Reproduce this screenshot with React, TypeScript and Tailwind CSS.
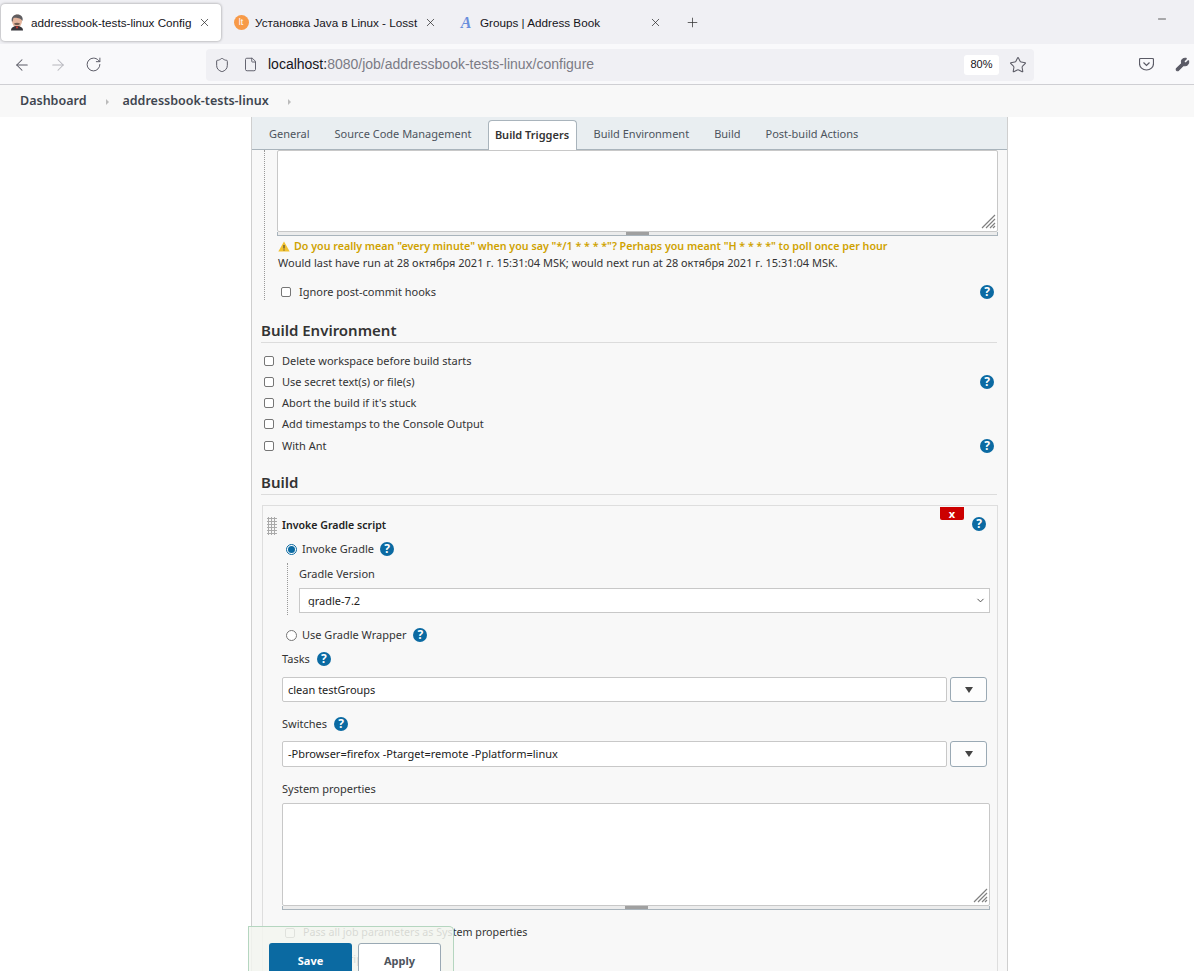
import { ArrowLeft, ArrowRight, ChevronDown, File, Minus, Plus, RotateCw, Shield, Star, Wrench, X } from "lucide-react";

function Help() {
  return (
    <span className="flex h-[14px] w-[14px] shrink-0 -translate-y-px items-center justify-center rounded-full bg-[#0b6aa2] text-[12px] leading-none font-bold text-white">?</span>
  );
}

function Check({ label, help, className = "" }: { label: string; help?: boolean; className?: string }) {
  return (
    <div className={`flex h-[21px] items-center pr-[3px] ${className}`}>
      <span className="h-[10px] w-[10px] -translate-y-px rounded-[2px] border border-[#767676] bg-white" />
      <span className="ml-[8px] flex-1 text-[#333]">{label}</span>
      {help && <Help />}
    </div>
  );
}

function Heading({ children }: { children: string }) {
  return (
    <div className="h-[22px] border-b border-[#dcdcdc] text-[15px] leading-[18px] font-semibold text-[#333]">{children}</div>
  );
}

function Grip() {
  return (
    <div className="absolute top-[11px] left-[4px] h-[18px] w-[10px] bg-[radial-gradient(#aaa_1px,transparent_1.2px)] bg-[length:3px_3px]" />
  );
}

function ResizeCorner() {
  return (
    <svg className="absolute right-[1px] bottom-[2px]" width="15" height="15" viewBox="0 0 15 15" stroke="#808080" strokeWidth="1.2">
      <path d="M1 14 14 1M5 14 14 5M9 14 14 9M12 14 14 12" />
    </svg>
  );
}

function TextArea({ className }: { className: string }) {
  return (
    <div className={className}>
      <div className="relative h-full rounded-[2px] border border-[#c8c8c8] bg-white">
        <ResizeCorner />
      </div>
      <div className="relative flex h-[4px] justify-center border-x border-b border-[#a9b4bc] bg-[#ececec]">
        <div className="h-[3px] w-[23px] bg-[#a0a0a0]" />
      </div>
    </div>
  );
}

function ComboRow({ value, tall }: { value: string; tall?: boolean }) {
  const height = tall ? "h-[26px]" : "h-[25px]";
  return (
    <div className="flex items-center pr-[3px]">
      <div className={`flex ${height} flex-1 items-center rounded-[2px] border border-[#c8c8c8] bg-white pt-px pl-[5px] text-[#222]`}>{value}</div>
      <div className={`ml-[3px] flex ${height} w-[37px] items-center justify-center rounded-[3px] border border-[#9aa9b4] bg-[#fdfdfd]`}>
        <span className="h-0 w-0 border-x-[4px] border-t-[6px] border-x-transparent border-t-[#444]" />
      </div>
    </div>
  );
}

function BrowserTab({ icon, title, active, width }: { icon: React.ReactNode; title: string; active?: boolean; width: string }) {
  return (
    <div className={`flex h-[37px] ${width} items-center rounded-[4px] pr-[10px] pl-[8px] ${active ? "bg-white shadow-[0_0_3px_rgba(0,0,0,0.4)]" : ""}`}>
      <span className="mr-[6px] flex h-[16px] w-[16px] shrink-0 items-center justify-center">{icon}</span>
      <span className="flex-1 overflow-hidden text-[11.7px] whitespace-nowrap text-[#15141a]">{title}</span>
      <X size={13} strokeWidth={1.3} className="ml-[4px] shrink-0 text-[#222]" />
    </div>
  );
}

function JenkinsIcon() {
  return (
    <svg width="16" height="17" viewBox="0 0 16 17">
      <ellipse cx="8" cy="7" rx="5" ry="6.500" fill="#e3b49c" />
      <path d="M3 8C1.500 3 5 .5 8.500 .5 12 .5 14.500 3 13.500 7 12.500 4 6 3 4.500 4 4 5.500 4 7 3 8Z" fill="#5f5d60" />
      <path d="M5 9.500c2-1 4-1 6 0-.5 2-5.500 2-6 0Z" fill="#6d5a50" />
      <path d="M2 16.500c0-3 2.500-4.500 6-4.500s6 1.500 6 4.500Z" fill="#35353b" />
      <path d="M6.500 12.500h3L8 15Z" fill="#d33833" />
    </svg>
  );
}

export default function App() {
  return (
    <div className="relative flex h-[971px] w-[1194px] flex-col overflow-hidden bg-white font-['Noto_Sans','Open_Sans',sans-serif] text-[11px] text-[#333]">
      {/* browser tabs */}
      <div className="flex h-[44px] shrink-0 items-start bg-[#f0f0f4] pt-[4px] pl-[1px] font-['Liberation_Sans',sans-serif]">
        <BrowserTab active width="w-[220px]" icon={<JenkinsIcon />} title="addressbook-tests-linux Config" />
        <div className="w-[4px]" />
        <BrowserTab width="w-[222px]" title="Установка Java в Linux - Losst" icon={<span className="flex h-[15px] w-[15px] items-center justify-center rounded-full bg-[#f79a48] text-[9px] text-white">lt</span>} />
        <div className="w-[3px]" />
        <BrowserTab width="w-[222px]" title="Groups | Address Book" icon={<span className="font-['Liberation_Serif',serif] text-[16px] leading-none font-bold text-[#6a8fdc] italic">A</span>} />
        <Plus size={15} strokeWidth={1.2} className="mt-[11px] ml-[13px] text-[#333]" />
        <div className="flex-1" />
        <Minus size={12} strokeWidth={1.3} className="mt-[9px] mr-[26px] text-[#111]" />
      </div>

      {/* toolbar */}
      <div className="flex h-[41px] shrink-0 items-center border-b border-[#cfcfd3] bg-[#f9f9fb] pt-px pl-[13px] font-['Liberation_Sans',sans-serif]">
        <ArrowLeft size={18} strokeWidth={1.4} className="text-[#5b5b66]" />
        <ArrowRight size={18} strokeWidth={1.4} className="ml-[18px] text-[#b5b5bb]" />
        <RotateCw size={17} strokeWidth={1.4} className="ml-[18px] text-[#5b5b66]" />
        <div className="ml-[104px] flex h-[32px] w-[828px] items-center rounded-[4px] bg-[#f0f0f4] pl-[8px]">
          <Shield size={16} strokeWidth={1.5} className="text-[#5b5b66]" />
          <File size={15} strokeWidth={1.5} className="ml-[13px] text-[#5b5b66]" />
          <span className="ml-[10px] flex-1 text-[14px] text-[#7b7b85]">
            <span className="text-[#15141a]">localhost:</span>8080/job/addressbook-tests-linux/configure
          </span>
          <span className="flex h-[20px] w-[35px] items-center justify-center rounded-[3px] bg-white text-[11px] text-[#15141a]">80%</span>
          <Star size={18} strokeWidth={1.4} className="mr-[7px] ml-[10px] text-[#5b5b66]" />
        </div>
        <div className="flex-1" />
        <svg width="15" height="15" viewBox="0 0 15 15" fill="none" stroke="#5b5b66" strokeWidth="1.2" className="mr-[21px]">
          <path d="M1.500 1.500h12a1 1 0 0 1 1 1v4a7 6.500 0 0 1-14 0v-4a1 1 0 0 1 1-1Z" />
          <path d="M4.500 5.500 7.500 8.500l3-3" />
        </svg>
        <Wrench size={15} strokeWidth={1.8} fill="currentColor" className="mr-[4px] text-[#5b5b66]" />
      </div>

      {/* breadcrumbs */}
      <div className="flex h-[32px] shrink-0 items-center bg-[#f8f8f8] pt-px pl-[20px] text-[12.5px] font-semibold text-[#3f4650]">
        <span>Dashboard</span>
        <span className="mr-[13px] ml-[20px] h-0 w-0 border-y-[3px] border-l-[3px] border-y-transparent border-l-[#bbb]" />
        <span>addressbook-tests-linux</span>
        <span className="ml-[19px] h-0 w-0 border-y-[3px] border-l-[3px] border-y-transparent border-l-[#bbb]" />
      </div>

      {/* config panel */}
      <div className="ml-[251px] min-h-0 w-[757px] flex-1 border-x border-[#cfcfcf] bg-[#f8f8f8]">
        <div className="flex h-[33px] items-end border-b border-[#a9b4bc] bg-[#e9eef1] pl-[8px] text-[#4d545d]">
          <span className="mb-[7px] ml-[9px]">General</span>
          <span className="mb-[7px] ml-[25px]">Source Code Management</span>
          <span className="-mb-px ml-[16px] flex h-[30px] w-[89px] items-center justify-center rounded-t-[4px] border border-b-0 border-[#a9b4bc] bg-white font-semibold text-[#333]">Build Triggers</span>
          <span className="mb-[7px] ml-[17px]">Build Environment</span>
          <span className="mb-[7px] ml-[25px]">Build</span>
          <span className="mb-[7px] ml-[25px]">Post-build Actions</span>
        </div>

        <div className="relative px-[9px]">
          <div className="absolute top-0 left-[12px] h-[150px] border-l border-dotted border-[#999]" />
          <TextArea className="ml-[16px] h-[86px] w-[721px] pb-[4px]" />

          <div className="mt-[2px] ml-[17px] flex h-[17px] items-center text-[#cfa200]">
            <svg width="12" height="11" viewBox="0 0 12 11" className="mr-[4px]">
              <path d="M6 .5 11.700 10.500H.3Z" fill="#f2c230" />
              <path d="M6 4v3.500M6 8.500v1" stroke="#333" strokeWidth="1" />
            </svg>
            <span className="text-[10.7px] font-semibold">Do you really mean "every minute" when you say "*/1 * * * *"? Perhaps you meant "H * * * *" to poll once per hour</span>
          </div>
          <div className="ml-[17px] flex h-[17px] items-center text-[#333]">Would last have run at 28 октября 2021 г. 15:31:04 MSK; would next run at 28 октября 2021 г. 15:31:04 MSK.</div>

          <div className="mt-[9px] ml-[20px]">
            <div className="flex h-[21px] items-center pr-[4px]">
              <span className="h-[10px] w-[10px] rounded-[2px] border border-[#767676] bg-white" />
              <span className="ml-[8px] flex-1 translate-y-px">Ignore post-commit hooks</span>
              <span className="translate-y-px"><Help /></span>
            </div>
          </div>

          <div className="mt-[19px] pr-[1px]">
            <Heading>Build Environment</Heading>
          </div>
          <div className="mt-[8px] ml-[3px] pr-[1px]">
            <Check label="Delete workspace before build starts" />
            <Check label="Use secret text(s) or file(s)" help />
            <Check label="Abort the build if it's stuck" />
            <Check label="Add timestamps to the Console Output" />
            <Check label="With Ant" help className="mt-px" />
          </div>

          <div className="mt-[16px] pr-[1px]">
            <Heading>Build</Heading>
          </div>

          {/* Invoke Gradle builder */}
          <div className="relative mt-[10px] ml-[1px] h-[480px] border border-[#dedede] pr-[7px] pl-[19px]">
            <Grip />
            <div className="absolute top-[1px] right-[33px] flex h-[13px] w-[24px] items-center justify-center rounded-b-[2px] bg-[#cc0000] text-[11px] leading-none font-bold text-white">x</div>
            <div className="absolute top-[12px] right-[11px]"><Help /></div>

            <div className="flex h-[38px] items-center pt-[2px] text-[10.6px] font-semibold text-[#222]">Invoke Gradle script</div>
            <div className="-mt-[5px] ml-[4px] flex h-[21px] items-center">
              <span className="flex h-[11px] w-[11px] items-center justify-center rounded-full border border-[#0b6aa2] bg-white">
                <span className="h-[7px] w-[7px] rounded-full bg-[#0b6aa2]" />
              </span>
              <span className="mr-[6px] ml-[5px]">Invoke Gradle</span>
              <Help />
            </div>
            <div className="relative ml-[5px] pl-[12px]">
              <div className="absolute top-[3px] left-0 h-[52px] border-l border-dotted border-[#999]" />
              <div className="flex h-[28px] items-center">Gradle Version</div>
              <div className="flex h-[25px] items-center border border-[#c8c8c8] bg-white pr-[3px] pl-[8px] text-[#222]">
                <span className="h-[13px] flex-1 overflow-hidden leading-[14px]">gradle-7.2</span>
                <ChevronDown size={11} strokeWidth={2} className="text-[#444]" />
              </div>
            </div>
            <div className="mt-[12px] ml-[4px] flex h-[21px] items-center">
              <span className="h-[11px] w-[11px] rounded-full border border-[#767676] bg-white" />
              <span className="mr-[7px] ml-[5px]">Use Gradle Wrapper</span>
              <Help />
            </div>
            <div className="mt-[3px] flex h-[21px] items-center">
              <span className="mr-[7px]">Tasks</span>
              <Help />
            </div>
            <div className="mt-[7px]"><ComboRow value="clean testGroups" /></div>
            <div className="mt-[12px] flex h-[21px] items-center">
              <span className="mr-[7px]">Switches</span>
              <Help />
            </div>
            <div className="mt-[6px]"><ComboRow tall value="-Pbrowser=firefox -Ptarget=remote -Pplatform=linux" /></div>
            <div className="mt-[12px] flex h-[21px] items-center">System properties</div>
            <TextArea className="mt-[3px] h-[107px] pb-[4px]" />
            <div className="mt-[12px] ml-[3px] flex h-[21px] items-center">
              <span className="h-[10px] w-[10px] rounded-[2px] border border-[#767676] bg-white" />
              <span className="ml-[8px] text-[10.7px]">Pass all job parameters as System properties</span>
            </div>
            <div className="mt-[6px] flex h-[21px] items-center">Root Build script</div>
          </div>
        </div>
      </div>

      {/* sticky save bar */}
      <div className="absolute bottom-0 left-[248px] flex h-[45px] w-[206px] gap-[6px] rounded-tr-[5px] border border-b-0 border-[#b5d6c0] bg-[#f3f6f0]/85 pt-[16px] pl-[20px]">
        <span className="flex h-[36px] w-[83px] items-center justify-center rounded-[3px] bg-[#0b6aa2] font-bold text-white">Save</span>
        <span className="flex h-[36px] w-[83px] items-center justify-center rounded-[3px] border border-[#9aa9b4] bg-white font-bold text-[#4d545d]">Apply</span>
      </div>
    </div>
  );
}
